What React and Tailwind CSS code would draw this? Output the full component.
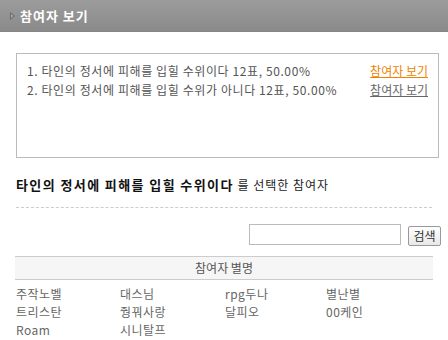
import React from 'react';

const font = { fontFamily: '"Noto Sans CJK KR", "Noto Sans", sans-serif' };

const results = [
  { text: '1. 타인의 정서에 피해를 입힐 수위이다 12표, 50.00%', active: true },
  { text: '2. 타인의 정서에 피해를 입힐 수위가 아니다 12표, 50.00%', active: false },
];

const names = ['주작노벨', '대스님', 'rpg두나', '별난별', '트리스탄', '줭꿔사랑', '달피오', '00케인', 'Roam', '시니탈프'];

export default function App() {
  return (
    <div className="w-[448px] h-[340px] bg-white overflow-hidden text-[12px] text-[#555]" style={font}>
      <div className="h-[32px] flex items-center pl-[10px] bg-gradient-to-b from-[#9c9c9c] to-[#8a8a8a] border-b border-[#858585]">
        <svg width="5" height="8" viewBox="0 0 5 8" className="mr-[5px]">
          <path d="M0 0 L5 4 L0 8 Z" fill="#6a6a6a" />
          <path d="M1 2 L3.4 4 L1 6 Z" fill="#b0b0b0" />
        </svg>
        <span className="text-white font-bold text-[13px] tracking-[1px]">참여자 보기</span>
      </div>

      <div className="mx-[16px] mt-[21px] w-[423px] h-[105px] border border-[#bbb] pt-[7px] pl-[10px] pr-[10px]">
        {results.map((r) => (
          <div key={r.text} className="flex justify-between h-[19px] items-center">
            <span className="tracking-[0.6px]">{r.text}</span>
            <a className={r.active ? 'underline text-[#f08300]' : 'underline text-[#666]'}>참여자 보기</a>
          </div>
        ))}
      </div>

      <div className="mx-[16px] mt-[17px] text-[12px] text-[#222]">
        <b className="font-bold text-[13px] text-[#111] tracking-[1.4px]">타인의 정서에 피해를 입힐 수위이다</b>
        <span className="tracking-[1px]"> 를 선택한 참여자</span>
      </div>

      <div className="mx-[16px] mt-[12px] border-t border-dashed border-[#ccc]" />

      <div className="flex justify-end items-center gap-[7px] mr-[7px] mt-[16px]">
        <input className="w-[152px] h-[21px] border border-[#bbb] outline-none" />
        <button className="w-[33px] h-[20px] border border-[#999] rounded-[2px] bg-gradient-to-b from-white to-[#e8e8e8] text-[12px] text-[#333] leading-none mt-[2px]">검색</button>
      </div>

      <div className="mx-[15px] mt-[10px] h-[24px] bg-[#f6f6f6] border-y border-[#ccc] flex items-center justify-center text-[#555]">
        참여자 별명
      </div>

      <div className="ml-[16px] mt-[5px] grid grid-cols-[104px_105px_101px_100px] text-[#666] tracking-[0.5px]">
        {names.map((n) => (
          <div key={n} className="h-[18px] leading-[18px]">{n}</div>
        ))}
      </div>
    </div>
  );
}
